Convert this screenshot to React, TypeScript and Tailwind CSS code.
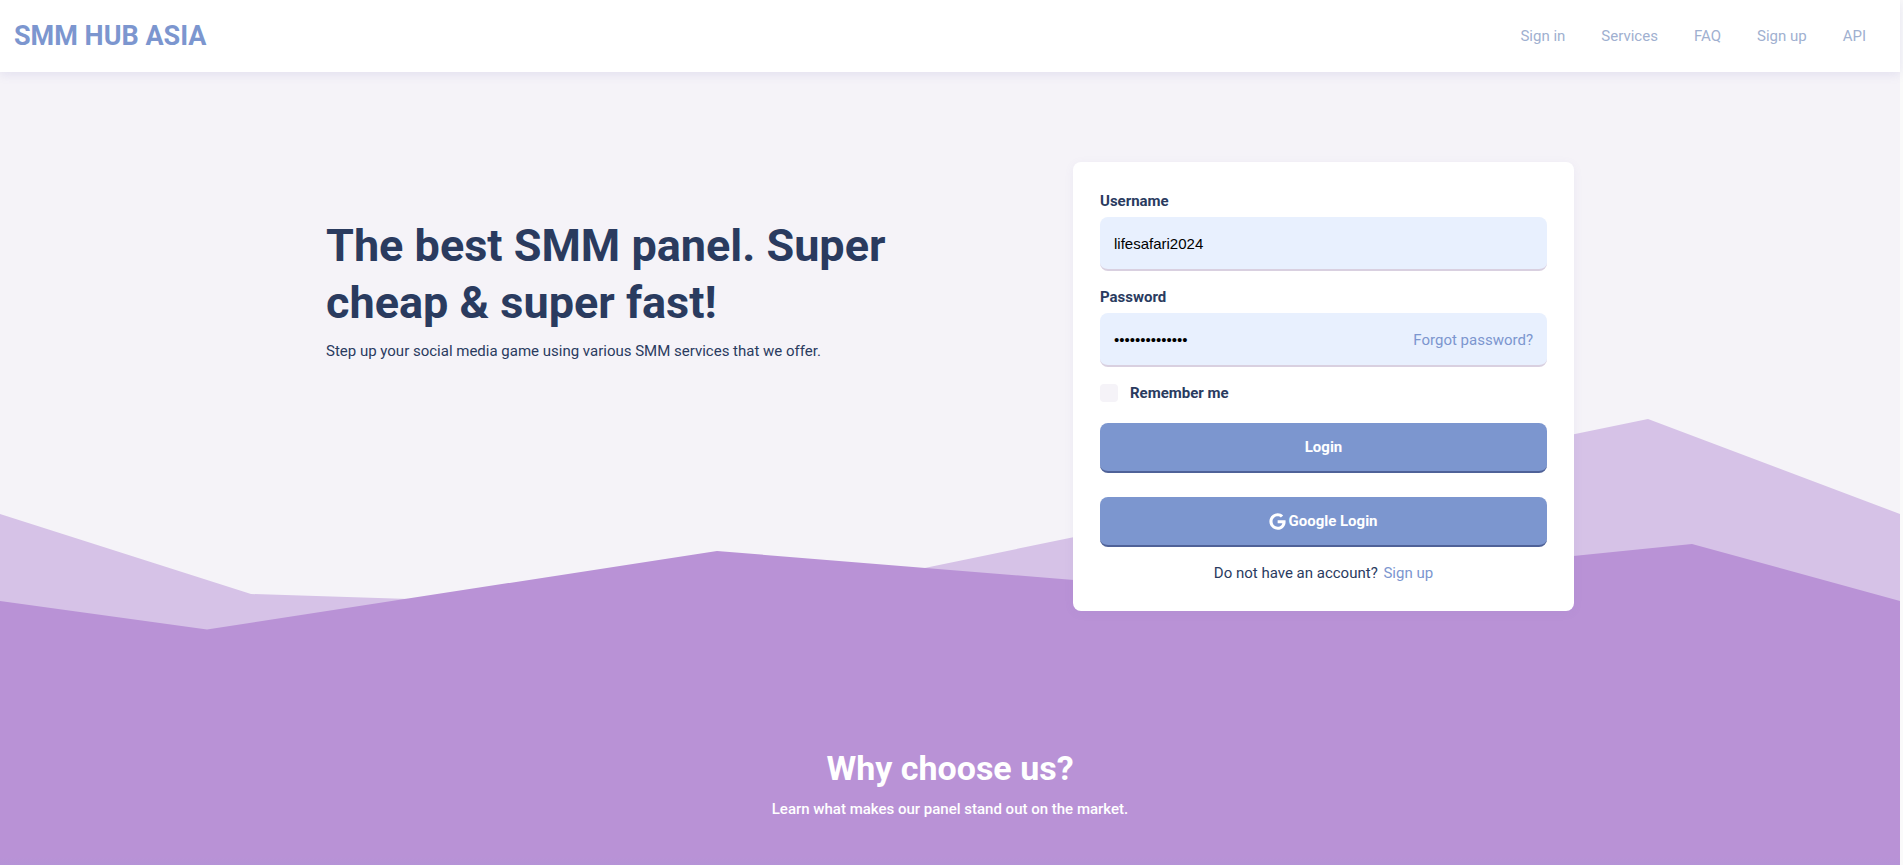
import React, { useState } from "react";
import { FaGoogle } from "react-icons/fa";

const navLinks = ["Sign in", "Services", "FAQ", "Sign up", "API"];

const inputClass =
  "w-full h-[54px] px-3.5 rounded-lg border-b-2 border-[#d9d0e0] bg-[#e8f0fe] text-[15px] text-black outline-none font-['Liberation_Sans',sans-serif]";

const buttonClass =
  "w-full h-[50px] rounded-lg border-b-2 border-[#4f6298] bg-[#7c96cf] hover:bg-[#6d88c4] text-[15px] font-bold text-white flex items-center justify-center gap-0.5 transition-colors";

function Navbar() {
  return (
    <header className="relative z-10 h-[72px] pl-3.5 pr-[34px] bg-white shadow-[0_2px_10px_rgba(124,120,190,0.16)] flex items-center justify-between">
      <a href="#" className="text-[27px] font-bold text-[#7c96cf]">
        SMM HUB ASIA
      </a>
      <nav className="flex items-center gap-9">
        {navLinks.map((link) => (
          <a key={link} href="#" className="text-[#a0b0d0] hover:text-[#7c96cf]">
            {link}
          </a>
        ))}
      </nav>
    </header>
  );
}

function Hills() {
  return (
    <svg
      className="absolute inset-x-0 top-[347px] w-full h-[446px]"
      viewBox="0 419 1900 446"
      preserveAspectRatio="none"
      aria-hidden="true"
    >
      <path d="M0 514 L251 594 L725 609 L1648 419 L1900 514 V865 H0 Z" fill="#d6c2e7" />
      <path d="M0 601 L207 629.5 L717 551 L1220 592 L1692 544 L1900 601 V865 H0 Z" fill="#b992d6" />
    </svg>
  );
}

function LoginCard() {
  const [username, setUsername] = useState("lifesafari2024");
  const [password, setPassword] = useState("abcdefghijklmn");
  const [remember, setRemember] = useState(false);

  return (
    <form
      onSubmit={(e) => e.preventDefault()}
      className="w-full max-w-[501px] rounded-lg bg-white px-[27px] pt-[27px] pb-[26px] shadow-[0_2px_10px_rgba(124,120,190,0.08)]"
    >
      <div>
        <label htmlFor="username" className="block pb-1 font-bold leading-6">
          Username
        </label>
        <input
          id="username"
          type="text"
          value={username}
          onChange={(e) => setUsername(e.target.value)}
          className={inputClass}
        />
      </div>

      <div className="mt-3.5">
        <label htmlFor="password" className="block pb-1 font-bold leading-6">
          Password
        </label>
        <div className="relative">
          <input
            id="password"
            type="password"
            value={password}
            onChange={(e) => setPassword(e.target.value)}
            className={inputClass}
          />
          <a href="#" className="absolute inset-y-0 right-3.5 flex items-center text-[#7c96cf]">
            Forgot password?
          </a>
        </div>
      </div>

      <div className="mt-3.5 flex items-center gap-3">
        <input
          id="remember"
          type="checkbox"
          checked={remember}
          onChange={(e) => setRemember(e.target.checked)}
          className="appearance-none w-[18px] h-[18px] rounded bg-[#f5f3f8] checked:bg-[#7c96cf]"
        />
        <label htmlFor="remember" className="font-bold leading-6">
          Remember me
        </label>
      </div>

      <button type="submit" className={`mt-[18px] ${buttonClass}`}>
        Login
      </button>
      <button type="button" className={`mt-6 ${buttonClass}`}>
        <FaGoogle className="w-[17px] h-[17px]" />
        Google Login
      </button>

      <p className="mt-3.5 text-center leading-6">
        Do not have an account?{" "}
        <a href="#" className="ml-0.5 text-[#7c96cf]">
          Sign up
        </a>
      </p>
    </form>
  );
}

export default function App() {
  return (
    <div className="min-h-screen bg-[#fafafa] pr-[3px] font-[Roboto,sans-serif] text-[15px] text-[#2a3b5f]">
      <div className="min-h-screen bg-[#b992d6]">
        <Navbar />
        <main className="relative">
          <div className="absolute inset-x-0 top-0 h-[600px] bg-[#f5f3f8]" />
          <Hills />

          <section className="relative mx-auto max-w-[1248px] pt-[90px] flex items-start justify-between">
            <div className="w-[46%] shrink-0 pt-[55px]">
              <h1 className="text-[45px] leading-[57px] font-bold">
                The best SMM panel. Super cheap &amp; super fast!
              </h1>
              <p className="mt-2 leading-6">
                Step up your social media game using various SMM services that we offer.
              </p>
            </div>
            <LoginCard />
          </section>

          <section className="relative pt-[134px] pb-9 text-center text-white">
            <h2 className="text-[34px] leading-[46px] font-bold">Why choose us?</h2>
            <p className="mt-1.5 font-medium leading-6">
              Learn what makes our panel stand out on the market.
            </p>
          </section>
          <div className="relative h-2 bg-linear-to-b from-[#b992d6] to-[#b593d7]" />
        </main>
      </div>
    </div>
  );
}
